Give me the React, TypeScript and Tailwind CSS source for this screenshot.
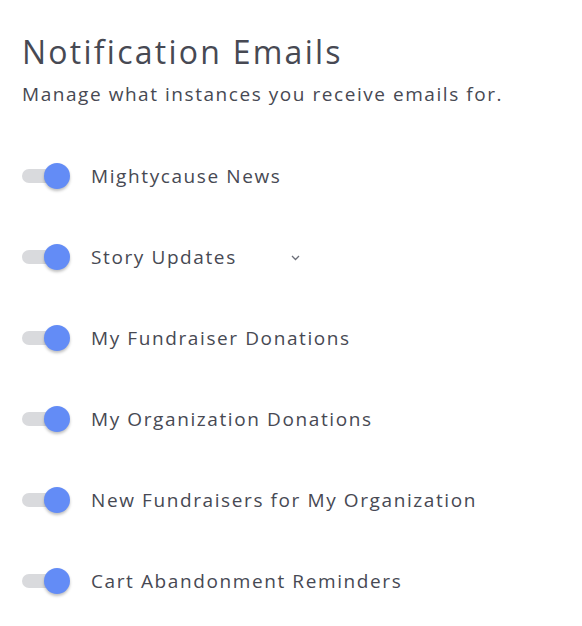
import React, { useState } from 'react';

const items = [
  { label: 'Mightycause News' },
  { label: 'Story Updates', chevron: true },
  { label: 'My Fundraiser Donations' },
  { label: 'My Organization Donations' },
  { label: 'New Fundraisers for My Organization' },
  { label: 'Cart Abandonment Reminders' },
];

function Toggle({ on, onClick }: { on: boolean; onClick: () => void }) {
  return (
    <button
      onClick={onClick}
      className="relative h-[26px] w-[48px] shrink-0 flex items-center"
    >
      <span className="absolute left-0 right-[6px] h-[14px] rounded-full bg-[#d9dadd]" />
      <span
        className={`absolute top-0 h-[26px] w-[26px] rounded-full shadow-[0_2px_3px_rgba(0,0,0,0.25)] ${
          on ? 'left-[22px] bg-[#638cf6]' : 'left-0 bg-white'
        }`}
      />
    </button>
  );
}

export default function App() {
  const [state, setState] = useState(items.map(() => true));

  return (
    <div className="min-h-screen bg-white px-[22px] pt-[30px] font-['Open_Sans',sans-serif] text-[#474953]">
      <h1 className="text-[32px] leading-[44px] tracking-[2.25px]">Notification Emails</h1>
      <p className="mt-[7px] text-[19px] leading-[26px] tracking-[1.55px]">
        Manage what instances you receive emails for.
      </p>

      <ul className="mt-[56px] flex flex-col gap-[55px]">
        {items.map((item, i) => (
          <li key={item.label} className="flex h-[26px] items-center">
            <Toggle
              on={state[i]}
              onClick={() => setState((s) => s.map((v, j) => (j === i ? !v : v)))}
            />
            <span className="ml-[21px] text-[19px] tracking-[1.6px]">{item.label}</span>
            {item.chevron && (
              <svg className="ml-[54px] mt-[2px]" width="9" height="6" viewBox="0 0 9 6" fill="none">
                <path d="M1 1l3.5 3.5L8 1" stroke="#6b6e78" strokeWidth="1.3" />
              </svg>
            )}
          </li>
        ))}
      </ul>
    </div>
  );
}
